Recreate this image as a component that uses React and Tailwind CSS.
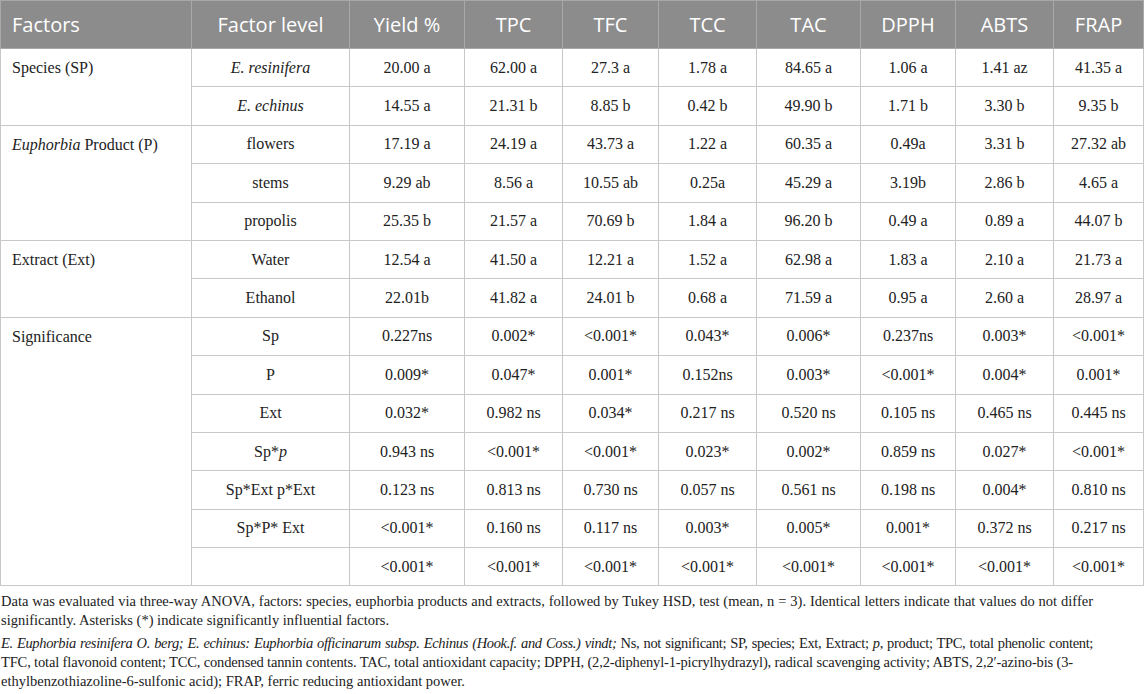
import React from "react";

const cols = [191, 158, 115, 98, 96, 98, 104, 95, 98, 90];
const heads = ["Factors", "Factor level", "Yield %", "TPC", "TFC", "TCC", "TAC", "DPPH", "ABTS", "FRAP"];

const groups = [
  {
    name: "Species (SP)",
    rows: [
      [<i>E. resinifera</i>, "20.00 a", "62.00 a", "27.3 a", "1.78 a", "84.65 a", "1.06 a", "1.41 az", "41.35 a"],
      [<i>E. echinus</i>, "14.55 a", "21.31 b", "8.85 b", "0.42 b", "49.90 b", "1.71 b", "3.30 b", "9.35 b"],
    ],
  },
  {
    name: (
      <>
        <i>Euphorbia</i> Product (P)
      </>
    ),
    rows: [
      ["flowers", "17.19 a", "24.19 a", "43.73 a", "1.22 a", "60.35 a", "0.49a", "3.31 b", "27.32 ab"],
      ["stems", "9.29 ab", "8.56 a", "10.55 ab", "0.25a", "45.29 a", "3.19b", "2.86 b", "4.65 a"],
      ["propolis", "25.35 b", "21.57 a", "70.69 b", "1.84 a", "96.20 b", "0.49 a", "0.89 a", "44.07 b"],
    ],
  },
  {
    name: "Extract (Ext)",
    rows: [
      ["Water", "12.54 a", "41.50 a", "12.21 a", "1.52 a", "62.98 a", "1.83 a", "2.10 a", "21.73 a"],
      ["Ethanol", "22.01b", "41.82 a", "24.01 b", "0.68 a", "71.59 a", "0.95 a", "2.60 a", "28.97 a"],
    ],
  },
  {
    name: "Significance",
    rows: [
      ["Sp", "0.227ns", "0.002*", "<0.001*", "0.043*", "0.006*", "0.237ns", "0.003*", "<0.001*"],
      ["P", "0.009*", "0.047*", "0.001*", "0.152ns", "0.003*", "<0.001*", "0.004*", "0.001*"],
      ["Ext", "0.032*", "0.982 ns", "0.034*", "0.217 ns", "0.520 ns", "0.105 ns", "0.465 ns", "0.445 ns"],
      [<>Sp*<i>p</i></>, "0.943 ns", "<0.001*", "<0.001*", "0.023*", "0.002*", "0.859 ns", "0.027*", "<0.001*"],
      ["Sp*Ext p*Ext", "0.123 ns", "0.813 ns", "0.730 ns", "0.057 ns", "0.561 ns", "0.198 ns", "0.004*", "0.810 ns"],
      ["Sp*P* Ext", "<0.001*", "0.160 ns", "0.117 ns", "0.003*", "0.005*", "0.001*", "0.372 ns", "0.217 ns"],
      ["", "<0.001*", "<0.001*", "<0.001*", "<0.001*", "<0.001*", "<0.001*", "<0.001*", "<0.001*"],
    ],
  },
];

export default function App() {
  return (
    <div className="w-[1145px] h-[694px] bg-white overflow-hidden text-[#222]" style={{ fontFamily: '"Liberation Serif", serif' }}>
      <table className="table-fixed border-collapse w-[1144px]">
        <colgroup>
          {cols.map((w, i) => (
            <col key={i} style={{ width: w }} />
          ))}
        </colgroup>
        <thead>
          <tr className="h-[48px] bg-[#8c8c8c]">
            {heads.map((h, i) => (
              <th
                key={h}
                className={`border border-[#a8a8a8] font-normal text-white text-[20px] ${i === 0 ? "text-left pl-[11px]" : "text-center"}`}
                style={{ fontFamily: '"Open Sans", sans-serif' }}
              >
                {h}
              </th>
            ))}
          </tr>
        </thead>
        <tbody className="text-[16px]">
          {groups.map((g, gi) =>
            g.rows.map((r, ri) => (
              <tr key={gi + "-" + ri} className="h-[38.4px]">
                {ri === 0 && (
                  <td rowSpan={g.rows.length} className="border border-[#c8c8c8] align-top pl-[11px] pt-[8px] leading-[22px]">
                    {g.name}
                  </td>
                )}
                {r.map((c, ci) => (
                  <td key={ci} className="border border-[#c8c8c8] text-center leading-[22px] whitespace-nowrap">
                    {c}
                  </td>
                ))}
              </tr>
            ))
          )}
        </tbody>
      </table>
      {/* footnotes: justified to the same right edge, one block per printed line */}
      <div className="mt-[6px] pl-[1px] w-[1093px] text-[14.5px] leading-[19px] text-[#222]">
        <div className="text-justify [text-align-last:justify]">
          Data was evaluated via three-way ANOVA, factors: species, euphorbia products and extracts, followed by Tukey HSD, test (mean, n = 3). Identical letters indicate that values do not differ
        </div>
        <div className="whitespace-nowrap">significantly. Asterisks (*) indicate significantly influential factors.</div>
        <div className="mt-[4px] text-justify [text-align-last:justify] tracking-[-0.35px]">
          <i>E. Euphorbia resinifera O. berg; E. echinus: Euphorbia officinarum subsp. Echinus (Hook.f. and Coss.) vindt;</i> Ns, not significant; SP, species; Ext, Extract; <i>p</i>, product; TPC, total phenolic content;
        </div>
        <div className="whitespace-nowrap tracking-[-0.15px]">
          TFC, total flavonoid content; TCC, condensed tannin contents. TAC, total antioxidant capacity; DPPH, (2,2-diphenyl-1-picrylhydrazyl), radical scavenging activity; ABTS, 2,2′-azino-bis (3-
        </div>
        <div className="whitespace-nowrap">ethylbenzothiazoline-6-sulfonic acid); FRAP, ferric reducing antioxidant power.</div>
      </div>
    </div>
  );
}
